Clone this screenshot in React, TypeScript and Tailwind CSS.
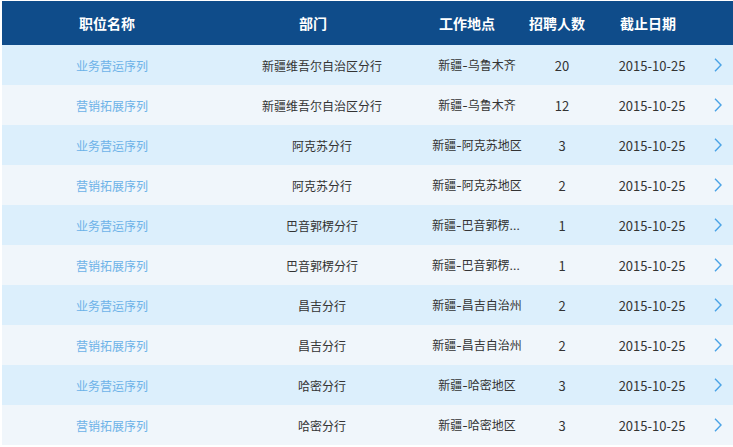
const rows = [
  ["业务营运序列", "新疆维吾尔自治区分行", "新疆-乌鲁木齐", "20"],
  ["营销拓展序列", "新疆维吾尔自治区分行", "新疆-乌鲁木齐", "12"],
  ["业务营运序列", "阿克苏分行", "新疆-阿克苏地区", "3"],
  ["营销拓展序列", "阿克苏分行", "新疆-阿克苏地区", "2"],
  ["业务营运序列", "巴音郭楞分行", "新疆-巴音郭楞蒙古自治州", "1"],
  ["营销拓展序列", "巴音郭楞分行", "新疆-巴音郭楞蒙古自治州", "1"],
  ["业务营运序列", "昌吉分行", "新疆-昌吉自治州", "2"],
  ["营销拓展序列", "昌吉分行", "新疆-昌吉自治州", "2"],
  ["业务营运序列", "哈密分行", "新疆-哈密地区", "3"],
  ["营销拓展序列", "哈密分行", "新疆-哈密地区", "3"],
];

function Chevron() {
  return (
    <svg width="8" height="14" viewBox="0 0 8 14" fill="none" className="text-[#4aa3e6]">
      <path d="M1 0.8L7 7L1 13.2" stroke="currentColor" strokeWidth="1.4" />
    </svg>
  );
}

export default function App() {
  return (
    <div className="h-[447px] w-[733px] bg-white pl-[2px] pt-px font-['Noto_Sans_CJK_SC','Liberation_Sans',sans-serif] text-xs">
      <div className="flex h-11 items-center bg-[#0f4c8a] text-center text-sm font-bold text-white">
        <div className="w-[210px]">职位名称</div>
        <div className="w-[202px]">部门</div>
        <div className="w-[106px]">工作地点</div>
        <div className="w-[74px]">招聘人数</div>
        <div className="w-[108px]">截止日期</div>
      </div>
      {rows.map((row, i) => (
        <div
          key={i}
          className={`flex h-10 items-center pt-px text-center text-[#333] ${i % 2 === 0 ? "bg-[#dceffc]" : "bg-[#f0f6fb]"}`}
        >
          <div className="w-[220px] text-[#6cb2e8]">{row[0]}</div>
          <div className="w-[200px]">{row[1]}</div>
          <div className="flex w-[110px] justify-center font-['Inter','Noto_Sans_CJK_SC',sans-serif]">
            <span className="max-w-[90px] truncate">{row[2]}</span>
          </div>
          <div className="w-[60px] text-[13px]">{row[3]}</div>
          <div className="w-[120px] text-[13px]">2015-10-25</div>
          <div className="flex flex-1 pb-px pl-[2px]">
            <Chevron />
          </div>
        </div>
      ))}
    </div>
  );
}
